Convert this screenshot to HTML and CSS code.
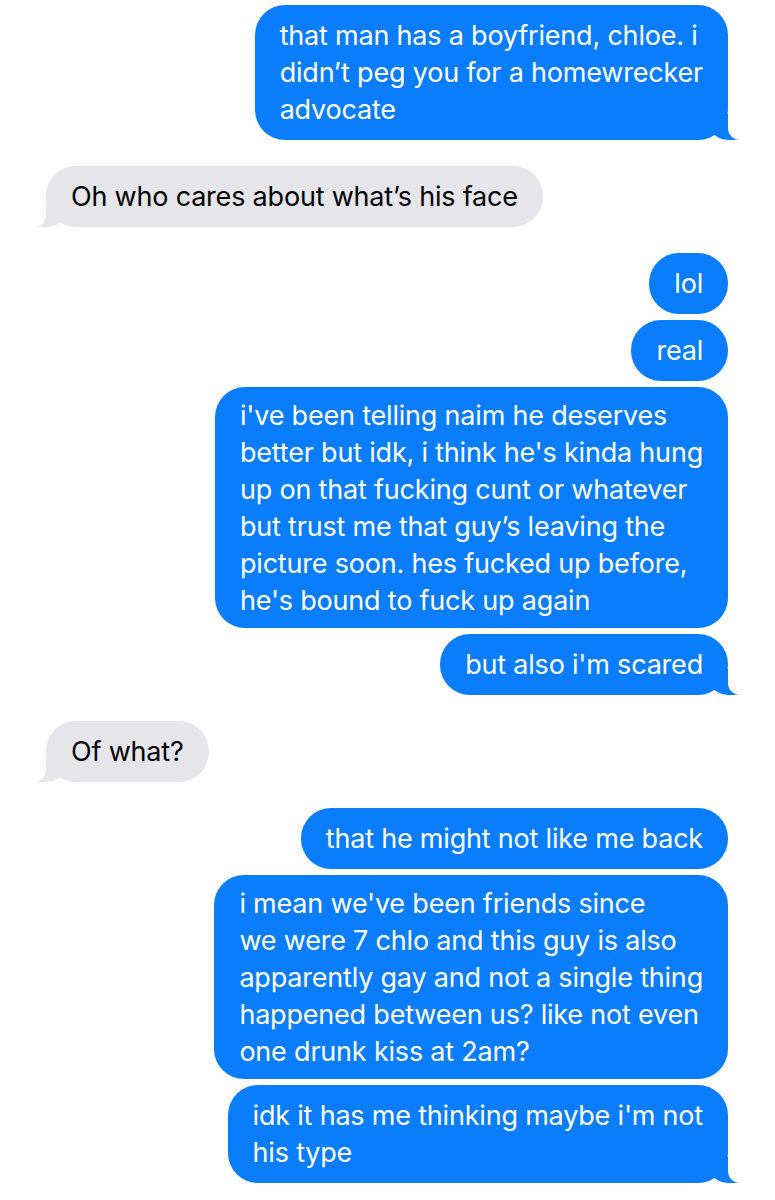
FILE: index.html
```html
<!DOCTYPE html>
<html lang="en">
<head>
  <meta charset="UTF-8" />
  <title>Messages</title>
  <meta name="viewport" content="width=device-width, initial-scale=1.0" />
  <link rel="stylesheet" href="styles.css">
</head>
<body>

<div class="thread">
  <div class="msg sent tail">that man has a boyfriend, chloe. i<br>didn’t peg you for a homewrecker<br>advocate</div>

  <div class="msg recv tail gap">Oh who cares about what’s his face</div>

  <div class="msg sent gap">lol</div>
  <div class="msg sent">real</div>
  <div class="msg sent tight">i've been telling naim he deserves<br>better but idk, i think he's kinda hung<br>up on that fucking cunt or whatever<br>but trust me that guy’s leaving the<br>picture soon. hes fucked up before,<br>he's bound to fuck up again</div>
  <div class="msg sent tail">but also i'm scared</div>

  <div class="msg recv tail gap">Of what?</div>

  <div class="msg sent gap">that he might not like me back</div>
  <div class="msg sent tight">i mean we've been friends since<br>we were 7 chlo and this guy is also<br>apparently gay and not a single thing<br>happened between us? like not even<br>one drunk kiss at 2am?</div>
  <div class="msg sent tail">idk it has me thinking maybe i'm not<br>his type</div>
</div>

</body>
</html>
```

FILE: styles.css
```css
body {
  margin: 0;
  background: #fff;
  font-family: "Inter", "Liberation Sans", sans-serif;
}
.thread {
  display: flex;
  flex-direction: column;
  gap: 6px;
  padding: 5px 47px 20px 46px;
}
.msg {
  position: relative;
  padding: 12px 25px;
  border-radius: 30px;
  font-size: 27px;
  line-height: 37px;
  white-space: nowrap;
  letter-spacing: -0.2px;
}
.msg.tight {
  padding-top: 9.5px;
  padding-bottom: 9.5px;
}
.msg.gap {
  margin-top: 20px;
}
.sent {
  align-self: flex-end;
  background: #0a7dfc;
  color: #fff;
}
.recv {
  align-self: flex-start;
  background: #e5e5ea;
  color: #000;
}

/* bubble tails */
.tail::before,
.tail::after {
  content: "";
  position: absolute;
  bottom: 0;
  height: 26px;
}
.sent.tail::before {
  right: -10px;
  width: 28px;
  background: #0a7dfc;
  border-bottom-left-radius: 18px 15px;
}
.sent.tail::after {
  right: -18px;
  width: 18px;
  background: #fff;
  border-bottom-left-radius: 12px;
}
.recv.tail::before {
  left: -9px;
  width: 28px;
  background: #e5e5ea;
  border-bottom-right-radius: 18px 15px;
}
.recv.tail::after {
  left: -18px;
  width: 18px;
  background: #fff;
  border-bottom-right-radius: 12px;
}
```
